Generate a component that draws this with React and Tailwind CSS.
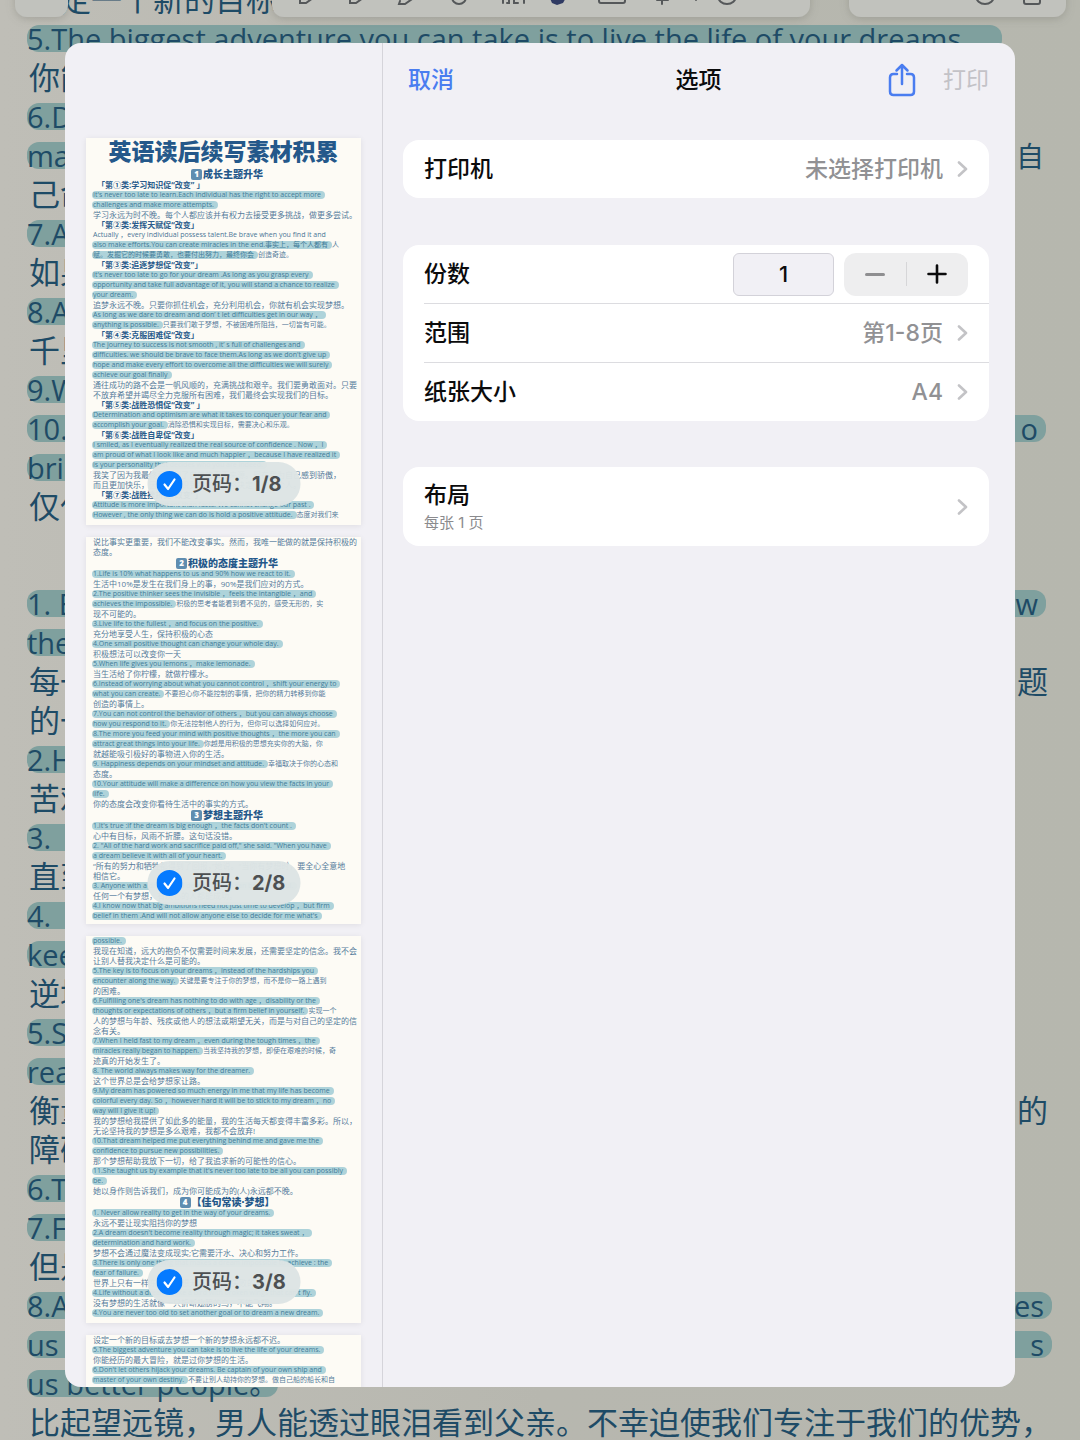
import { useState } from 'react';

const NOTE_LINES = [
  { text: '设定一个新的目标或去梦想一个新的梦想永远都不迟。' },
  { mark: '5.The biggest adventure you can take is to live the life of your dreams.', end: 'short' },
  { text: '你能' },
  { mark: '6.D', end: 'cut' },
  { mark: 'mas', end: 'cut', tail: '·自' },
  { text: '己命' },
  { mark: '7.A', end: 'cut' },
  { text: '如果' },
  { mark: '8.A', end: 'cut' },
  { text: '千里' },
  { mark: '9.W', end: 'cut' },
  { mark: '10.', end: 'full', tail: 'o' },
  { mark: 'bri', end: 'cut' },
  { text: '仅仅' },
  { gap: true },
  { mark: '1. E', end: 'full', tail: 'ow' },
  { mark: 'the', end: 'cut' },
  { text: '每一', tail: '题' },
  { text: '的一' },
  { mark: '2.H', end: 'cut' },
  { text: '苦难' },
  { mark: '3. ', end: 'cut' },
  { text: '直到' },
  { mark: '4. ', end: 'cut' },
  { mark: 'kee', end: 'cut' },
  { text: '逆境' },
  { mark: '5.S', end: 'cut' },
  { mark: 'rea', end: 'cut' },
  { text: '衡量', tail: '的' },
  { text: '障碍' },
  { mark: '6.T', end: 'cut' },
  { mark: '7.F', end: 'cut' },
  { text: '但是' },
  { mark: '8.A', end: 'wide', tail: 'es' },
  { mark: 'us t', end: 'wide', tail: 's' },
  { mark: 'us better people。', end: 'fit' },
  { text: '比起望远镜，男人能透过眼泪看到父亲。不幸迫使我们专注于我们的优势，' },
];

const PAGES = [
  {
    title: '英语读后续写素材积累',
    lines: [
      { head: '成长主题升华', badge: '1' },
      { sub: '「第①类:学习知识促“改变” 」' },
      { mark: "It's never too late to learn.Each individual has the right to accept more" },
      { mark: 'challenges and make more attempts.' },
      { text: '学习永远为时不晚。每个人都应该并有权力去接受更多挑战，做更多尝试。' },
      { sub: '「第②类:发挥天赋促“改变」' },
      { en: 'Actually ，every individual possess talent.Be brave when you find it and' },
      { mark: 'also make efforts.You can create miracles in the end.事实上，每个人都有', text: '人' },
      { mark: '赋。发掘它的时候要勇敢，也要付出努力，最终你会', text: '创造奇迹。' },
      { sub: '「第③类:追逐梦想促“改变”」' },
      { mark: "It's never too late to go for your dream .As long as you grasp every" },
      { mark: 'opportunity and take full advantage of it, you will stand a chance to realize' },
      { mark: 'your dream.' },
      { text: '追梦永远不晚。只要你抓住机会，充分利用机会，你就有机会实现梦想。' },
      { mark: 'As long as we dare to dream and don’ t  let difficulties get in our way ，' },
      { mark: 'anything is possible.', text: '只要我们敢于梦想，不被困难所阻挡，一切皆有可能。' },
      { sub: '「第④类:克服困难促“改变」' },
      { mark: 'The journey to success is not smooth , it’ s full of challenges and' },
      { mark: "difficulties. we should be brave to face them.As long as we don't give up" },
      { mark: 'hope and make every effort to overcome all the difficulties we will surely' },
      { mark: 'achieve our goal finally' },
      { text: '通往成功的路不会是一帆风顺的，充满挑战和艰辛。我们要勇敢面对。只要' },
      { text: '不放弃希望并竭尽全力克服所有困难，我们最终会实现我们的目标。' },
      { sub: '「第⑤类:战胜恐惧促“改变” 」' },
      { mark: 'Determination and optimism are what it takes to conquer your fear and' },
      { mark: 'accomplish your goal.', text: '消除恐惧和实现目标，需要决心和乐观。' },
      { sub: '「第⑥类:战胜自卑促“改变」' },
      { mark: 'I smiled, as I eventually realized the real source of confidence . Now ，I' },
      { mark: 'am proud of what I look like and much happier ，because I have realized it' },
      { mark: 'is your personality that decides who you are indeed.' },
      { text: '我笑了因为我最终意识到了自信的真正来源。现在我为自己感到骄傲，' },
      { text: '而且更加快乐，因为我意识到是你的性格决定了你这个人。' },
      { sub: '「第⑦类:战胜挫折促“改变”」' },
      { mark: 'Attitude is more important than facts. We cannot change our past .' },
      { mark: 'However , the only thing we can do is hold a positive attitude.', text: '态度对我们来' },
    ],
  },
  {
    lines: [
      { text: '说比事实更重要，我们不能改变事实。然而，我唯一能做的就是保持积极的' },
      { text: '态度。' },
      { head: '积极的态度主题升华', badge: '2' },
      { mark: '1.Life is 10% what happens to us and 90% how we react to it.' },
      { text: '生活中10%是发生在我们身上的事，90%是我们应对的方式。' },
      { mark: '2.The positive thinker sees the invisible ，feels the intangible ，and' },
      { mark: 'achieves the impossible.', text: ' 积极的思考者能看到看不见的，感受无形的，实' },
      { text: '现不可能的。' },
      { mark: '3.Live life to the fullest ，and focus on the positive.' },
      { text: '充分地享受人生，保持积极的心态' },
      { mark: '4.One small positive thought can change your whole day.' },
      { text: '积极想法可以改变你一天' },
      { mark: '5.When life gives you lemons ，make lemonade.' },
      { text: '当生活给了你柠檬，就做柠檬水。' },
      { mark: '6.Instead of worrying about what you cannot control ，shift your energy to' },
      { mark: 'what you can create.', text: ' 不要担心你不能控制的事情，把你的精力转移到你能' },
      { text: '创造的事情上。' },
      { mark: '7.You can not control the behavior of others ，but you can always choose' },
      { mark: 'how you respond to it.', text: '你无法控制他人的行为，但你可以选择如何应对。' },
      { mark: '8.The more you feed your mind with positive thoughts ，the more you can' },
      { mark: 'attract great things into your life.', text: ' 你越是用积极的思想充实你的大脑，你' },
      { text: '就越能吸引极好的事物进入你的生活。' },
      { mark: '9. Happiness depends on your mindset and attitude.', text: '幸福取决于你的心态和' },
      { text: '态度。' },
      { mark: '10.Your attitude will make a difference on how you view the facts in your' },
      { mark: 'life.' },
      { text: '你的态度会改变你看待生活中的事实的方式。' },
      { head: '梦想主题升华', badge: '3' },
      { mark: "1.It's true :if the dream is big enough ，the facts don't count ." },
      { text: '心中有目标，风雨不折腰。这句话没错。' },
      { mark: '2. "All of the hard work and sacrifice paid off," she said. "When you have' },
      { mark: 'a dream believe it with all of your heart.' },
      { text: '“所有的努力和牺牲都得到了回报，”她说。“当你有梦想时，要全心全意地' },
      { text: '相信它。' },
      { mark: '3. Anyone with a dream and determination can be successful.' },
      { text: '任何一个有梦想，有决心的人都能成功。' },
      { mark: '4.I know now that big ambitions need not just time to develop ，but firm' },
      { mark: "belief in them .And will not allow anyone else to decide for me what's" },
    ],
  },
  {
    lines: [
      { mark: 'possible.' },
      { text: '我现在知道，远大的抱负不仅需要时间来发展，还需要坚定的信念。我不会' },
      { text: '让别人替我决定什么是可能的。' },
      { mark: '5.The key is to focus on your dreams ，instead of the hardships you' },
      { mark: 'encounter along the way.', text: ' 关键是要专注于你的梦想，而不是你一路上遇到' },
      { text: '的困难。' },
      { mark: "6.Fulfilling one's dream has nothing to do with age ，disability or the" },
      { mark: 'thoughts or expectations of others ，but a firm belief in yourself.', text: '实现一个' },
      { text: '人的梦想与年龄、残疾或他人的想法或期望无关，而是与对自己的坚定的信' },
      { text: '念有关。' },
      { mark: '7.When I held fast to my dream ，even during the tough times ，the' },
      { mark: 'miracles really began to happen.', text: '当我坚持我的梦想，即使在艰难的时候，奇' },
      { text: '迹真的开始发生了。' },
      { mark: '8. The world always makes way for the dreamer.' },
      { text: '这个世界总是会给梦想家让路。' },
      { mark: '9.My dream has powered so much energy in me that my life has become' },
      { mark: 'colorful every day. So ，however hard it will be to stick to my dream ，no' },
      { mark: 'way will I give it up!' },
      { text: '我的梦想给我提供了如此多的能量，我的生活每天都变得丰富多彩。所以，' },
      { text: '无论坚持我的梦想是多么艰难，我都不会放弃!' },
      { mark: '10.That dream helped me put everything behind me and gave me the' },
      { mark: 'confidence to pursue new possibilities.' },
      { text: '那个梦想帮助我放下一切，给了我追求新的可能性的信心。' },
      { mark: "11.She taught us by example that it's never too late to be all you can possibly" },
      { mark: 'be.' },
      { text: '她以身作则告诉我们，成为你可能成为的(人)永远都不晚。' },
      { head: '【佳句常读·梦想】', badge: '4' },
      { mark: '1. Never allow reality to get in the way of your dreams.' },
      { text: '永远不要让现实阻挡你的梦想' },
      { mark: "2.A dream doesn't become reality through magic; it takes sweat ，" },
      { mark: 'determination and hard work.' },
      { text: '梦想不会通过魔法变成现实;它需要汗水、决心和努力工作。' },
      { mark: '3.There is only one thing that makes a dream impossible to achieve : the' },
      { mark: 'fear of failure.' },
      { text: '世界上只有一样东西使梦想无法实现:对失败的恐惧。' },
      { mark: "4.Life without a dream is like a bird with broken wings that can't fly." },
      { text: '没有梦想的生活就像一只折断翅膀的鸟，不能飞翔。' },
      { mark: '4.You are never too old to set another goal or to dream a new dream.' },
    ],
  },
  {
    lines: [
      { text: '设定一个新的目标或去梦想一个新的梦想永远都不迟。' },
      { mark: '5.The biggest adventure you can take is to live the life of your dreams.' },
      { text: '你能经历的最大冒险，就是过你梦想的生活。' },
      { mark: "6.Don't let others hijack your dreams. Be captain of your own ship and" },
      { mark: 'master of your own destiny.', text: '不要让别人劫持你的梦想。做自己船的船长和自' },
    ],
  },
];

const MARK_ENDS = {
  short: 'grow mr-[78px]',
  full: 'grow mr-[34px] pr-2',
  wide: 'grow mr-7 pr-2',
  fit: '',
};

function NoteLine({ line }) {
  if (line.gap) {
    return <div className="h-[58px]" />;
  }
  if (line.end === 'cut') {
    return (
      <div className="flex h-[39px] items-center justify-between pr-9 pl-[27px]">
        <span className="h-[27px] w-1/2 rounded-l-xl bg-[#7fa09e] text-[29px] leading-[27px]">{line.mark}</span>
        <span className="text-[28px]">{line.tail}</span>
      </div>
    );
  }
  if (line.mark) {
    return (
      <div className="flex h-[39px] items-center pl-[27px]">
        <div className={`flex h-[27px] justify-between rounded-xl bg-[#7fa09e] text-[29px] leading-[27px] ${MARK_ENDS[line.end]}`}>
          <span>{line.mark}</span>
          <span>{line.tail}</span>
        </div>
      </div>
    );
  }
  return (
    <div className="flex h-[39px] items-center justify-between pr-8 pl-[29px] text-[31px]">
      <span>{line.text}</span>
      <span>{line.tail}</span>
    </div>
  );
}

function Toolbar() {
  return (
    <svg className="absolute top-0 left-0 h-7 w-full" viewBox="0 0 1080 28" preserveAspectRatio="xMinYMin slice" fill="none" aria-hidden="true">
      <defs>
        <filter id="bar-shadow" x="-5%" y="-50%" width="110%" height="220%">
          <feDropShadow dx="0" dy="2" stdDeviation="4" floodColor="#6f6f68" floodOpacity="0.35" />
        </filter>
      </defs>
      <g fill="#c1c2bd" filter="url(#bar-shadow)">
        <rect x="15" y="-20" width="53" height="37" rx="12" />
        <rect x="272" y="-20" width="538" height="37" rx="12" />
        <rect x="849" y="-20" width="217" height="37" rx="12" />
      </g>
      <g stroke="#55585a" strokeWidth="2" strokeLinecap="round">
        <path d="M300 -4v7h6l7-5M350 -4v7h6l7-5M400 1l-1 3h6l10-7" />
        <path d="M452 -3a7 7 0 0 0 14 0M503 3v-6M507 3h2v-5M514 -2v5h4M524 3v-6" />
        <path d="M599 -3v4q0 2 2 2h22q2 0 2-2v-4M662 -4v8M657 0h11M696 -2v2" />
        <path d="M718 -4a9 8 0 0 0 18 0M976 -4a9 8 0 0 0 18 0M1024 -4v6q0 2 2 2h12q2 0 2-2v-6M1023 -1h18" />
      </g>
      <path d="M549-4l3 7 5 2 6-2 4-7z" fill="#2f3a63" />
    </svg>
  );
}

function NotePage() {
  return (
    <div aria-hidden="true" className="absolute inset-0 overflow-hidden bg-linear-to-r from-[#bfbeb7] via-[#b7b7af] to-[#b6b7ae] font-['Open_Sans','Noto_Sans_CJK_SC',sans-serif] whitespace-nowrap text-[#1e4b66]">
      <div className="-mt-5">
        {NOTE_LINES.map((line, i) => <NoteLine key={i} line={line} />)}
      </div>
      <Toolbar />
    </div>
  );
}

function SheetLine({ line }) {
  if (line.head) {
    return (
      <div className="flex h-3 items-center justify-center text-[10px] font-black text-[#24588a]">
        <span className="mr-px flex size-[11px] items-center justify-center rounded-xs bg-[#5f8db0] text-[8px] leading-none text-white">{line.badge}</span>
        {line.head}
      </div>
    );
  }
  if (line.sub) {
    return <div className="h-[10px] pl-1 text-[8px] leading-[10px] font-bold text-[#2a5c8c]">{line.sub}</div>;
  }
  return (
    <div className="flex h-[10px] items-center text-[7px] leading-[10px]">
      {line.mark && <span className="-ml-px h-[8px] rounded-full bg-[#aed3da] pr-1 pl-px leading-[8px] text-[#427c99]">{line.mark}</span>}
      {line.en && <span className="text-[#4a7596]">{line.en}</span>}
      {line.text && <span className={line.mark ? 'text-[#567c9c]' : 'text-[8px] text-[#567c9c]'}>{line.text}</span>}
    </div>
  );
}

function PageThumb({ page, number, checked, onToggle }) {
  return (
    <li className="relative h-[387px] shrink-0 overflow-hidden bg-[#fdfbf5] shadow-[0_1px_6px_rgba(0,0,0,0.08)]">
      <div className="pl-[7px] font-['Open_Sans','Noto_Sans_CJK_SC',sans-serif] whitespace-nowrap">
        {page.title && <div className="mb-1 h-[26px] -ml-[7px] text-center text-[23px] leading-[26px] font-black text-[#24588a]">{page.title}</div>}
        {page.lines.map((line, i) => <SheetLine key={i} line={line} />)}
      </div>
      <label className="absolute bottom-[19px] left-1/2 flex h-[44px] w-[153px] -translate-x-1/2 items-center rounded-full bg-[#dde4e4]/97 pl-[9px] text-[20px] text-[#4d5052]">
        <input type="checkbox" className="sr-only" checked={checked} onChange={onToggle} />
        <svg className="size-[26px] shrink-0" viewBox="0 0 26 26" fill="none" aria-hidden="true">
          <circle cx="13" cy="13" r="12" fill={checked ? '#057aff' : 'none'} stroke={checked ? '#057aff' : '#8e8e93'} strokeWidth="2" />
          {checked && <path d="M8 13.5l3.6 4.5L18 8.5" stroke="#fff" strokeWidth="2.2" strokeLinecap="round" strokeLinejoin="round" />}
        </svg>
        <span className="ml-[10px] font-medium">页码：</span>
        <span className="font-bold">{number}/8</span>
      </label>
    </li>
  );
}

function Chevron() {
  return (
    <svg className="ml-[14px] h-4 w-[11px] shrink-0" viewBox="0 0 11 16" fill="none" aria-hidden="true">
      <path d="M2 1.5L9 8l-7 6.5" stroke="#c3c3c6" strokeWidth="2.6" strokeLinecap="round" strokeLinejoin="round" />
    </svg>
  );
}

function OptionRow({ label, value }) {
  return (
    <button type="button" className="flex h-[58px] w-full items-center pr-[21px] text-left font-medium">
      <span className="grow">{label}</span>
      <span className="text-[#919194]">{value}</span>
      <Chevron />
    </button>
  );
}

function App() {
  const [copies, setCopies] = useState(1);
  const [skipped, setSkipped] = useState([]);

  const togglePage = (index) => {
    setSkipped((prev) => (prev.includes(index) ? prev.filter((n) => n !== index) : [...prev, index]));
  };

  return (
    <div className="relative h-screen overflow-hidden px-[65px] pt-[43px] pb-[53px] font-['Inter','Noto_Sans_CJK_SC',sans-serif]">
      <NotePage />

      <div role="dialog" aria-label="选项" className="relative flex h-full overflow-hidden rounded-2xl bg-[#f1f0f5]">
        <aside className="w-[318px] shrink-0 overflow-hidden border-r border-[#d5d4da] px-[21px] pt-[95px]">
          <ul className="flex flex-col gap-3">
            {PAGES.map((page, i) => (
              <PageThumb key={i} page={page} number={i + 1} checked={!skipped.includes(i)} onToggle={() => togglePage(i)} />
            ))}
          </ul>
        </aside>

        <section className="min-w-0 grow pr-[26px] pl-5 text-[23px] leading-none text-[#0b0b0c]">
          <header className="grid h-[74px] grid-cols-3 items-center pl-[5px]">
            <button type="button" className="justify-self-start font-medium text-[#4a7df0]">取消</button>
            <h1 className="text-center font-medium">选项</h1>
            <div className="flex items-center gap-[27px] justify-self-end">
              <button type="button" aria-label="共享">
                <svg className="h-[34px] w-7" viewBox="0 0 28 34" fill="none" stroke="#4a7df0" strokeWidth="2.5" strokeLinecap="round" strokeLinejoin="round" aria-hidden="true">
                  <path d="M9 11H5.5Q2 11 2 14.5V28.5q0 3.5 3.5 3.5h17q3.5 0 3.5-3.5V14.5q0-3.5-3.5-3.5H19" />
                  <path d="M14 21V2M8.5 7.5L14 2l5.5 5.5" />
                </svg>
              </button>
              <button type="button" disabled className="text-[#c3c2c7]">打印</button>
            </div>
          </header>

          <div className="mt-[23px] rounded-2xl bg-white pl-[21px]">
            <OptionRow label="打印机" value="未选择打印机" />
          </div>

          <div className="mt-[47px] divide-y divide-[#dcdce0] rounded-2xl bg-white pl-[21px]">
            <div className="flex h-[59px] items-center pr-[21px]">
              <label htmlFor="copies" className="grow font-medium">份数</label>
              <input
                id="copies"
                value={copies}
                onChange={(e) => setCopies(Number(e.target.value) || 1)}
                className="h-[43px] w-[101px] rounded-md border border-[#d3d2d9] bg-[#f1f0f5] text-center text-[22px] font-medium"
              />
              <div className="ml-[10px] flex h-[43px] w-[124px] items-center rounded-xl bg-[#eeeeef]">
                <button type="button" aria-label="减少份数" onClick={() => setCopies(Math.max(1, copies - 1))} className="flex flex-1 justify-center">
                  <span className="h-[3px] w-5 rounded-full bg-[#8e8e90]" />
                </button>
                <span className="h-6 w-px bg-[#d6d6d8]" />
                <button type="button" aria-label="增加份数" onClick={() => setCopies(copies + 1)} className="flex flex-1 justify-center">
                  <svg className="size-5" viewBox="0 0 20 20" stroke="#0b0b0c" strokeWidth="2.6" strokeLinecap="round" aria-hidden="true">
                    <path d="M10 1.5v17M1.5 10h17" />
                  </svg>
                </button>
              </div>
            </div>
            <div>
              <OptionRow label="范围" value="第1-8页" />
            </div>
            <OptionRow label="纸张大小" value="A4" />
          </div>

          <div className="mt-[46px] rounded-2xl bg-white pl-[21px]">
            <button type="button" className="flex h-[79px] w-full items-center pr-[21px] text-left">
              <span className="flex grow flex-col gap-2">
                <span className="font-medium">布局</span>
                <span className="text-[15px] text-[#8b8b8e]">每张 1 页</span>
              </span>
              <Chevron />
            </button>
          </div>
        </section>
      </div>
    </div>
  );
}

export default App;
